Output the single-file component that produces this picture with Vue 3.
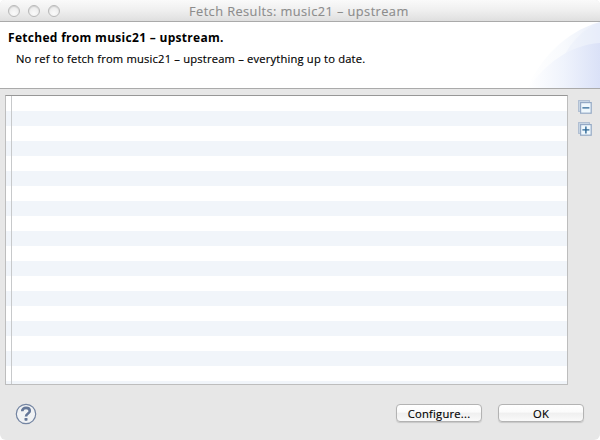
<script setup>
const rows = Array.from({ length: 20 }, (_, i) => i)
</script>

<template>
  <div class="window">
    <header class="titlebar">
      <div class="lights"><i></i><i></i><i></i></div>
      <span class="title">Fetch Results: music21 – upstream</span>
    </header>
    <section class="banner">
      <div class="copy">
        <h1>Fetched from music21 – upstream.</h1>
        <p>No ref to fetch from music21 – upstream – everything up to date.</p>
      </div>
      <svg class="swoosh" width="75" height="66" viewBox="0 0 75 66">
        <defs>
          <linearGradient id="outer" x1="0" x2="1" y1="0" y2="0">
            <stop offset="0" stop-color="#ffffff" />
            <stop offset=".5" stop-color="#f8fafd" />
            <stop offset="1" stop-color="#e9eefa" />
          </linearGradient>
          <linearGradient id="inner" x1="0" x2="1" y1="0" y2="0">
            <stop offset="0" stop-color="#ffffff" />
            <stop offset=".5" stop-color="#eff3fc" />
            <stop offset="1" stop-color="#dae1f7" />
          </linearGradient>
        </defs>
        <path d="M2 66C14 40 38 10 75 0V66Z" fill="url(#outer)" />
        <path d="M38 36C46 20 58 7 75 0V66H38Z" fill="#e4ebf9" opacity=".35" />
        <path d="M3 66C20 43 43 23 75 21V66Z" fill="url(#inner)" />
      </svg>
    </section>
    <main class="content">
      <div class="list">
        <div v-for="r in rows" :key="r" class="row"></div>
      </div>
      <div class="tools">
        <svg width="14" height="14" viewBox="0 0 14 14">
          <rect x=".6" y=".6" width="10.8" height="10.8" fill="#ccdae8" stroke="#afbed2" stroke-width="1.1" />
          <rect x="2.6" y="2.6" width="10.6" height="10.6" fill="#eff8fd" stroke="#94a9c5" stroke-width="1.2" />
          <path d="M4.4 7.9H11.4" stroke="#2b6594" stroke-width="1.3" />
        </svg>
        <svg width="14" height="14" viewBox="0 0 14 14">
          <rect x=".6" y=".6" width="10.8" height="10.8" fill="#ccdae8" stroke="#afbed2" stroke-width="1.1" />
          <rect x="2.6" y="2.6" width="10.6" height="10.6" fill="#eff8fd" stroke="#94a9c5" stroke-width="1.2" />
          <path d="M4.4 7.9H11.4M7.9 4.4V11.4" stroke="#2b6594" stroke-width="1.4" />
        </svg>
      </div>
    </main>
    <footer class="footer">
      <svg class="help" width="22" height="22" viewBox="0 0 22 22">
        <circle cx="11" cy="11" r="9.7" fill="#f0f2f4" stroke="#7485a2" stroke-width="1.2" />
        <path d="M7.2 8.2C7.2 5.9 8.8 4.9 11 4.9S14.8 6 14.8 8C14.8 10.6 11 10.5 11 13.5" fill="none" stroke="#647798" stroke-width="2.6" />
        <rect x="9.5" y="14.9" width="3" height="2.9" rx=".7" fill="#647798" />
      </svg>
      <div class="buttons">
        <button class="configure">Configure...</button>
        <button class="ok">OK</button>
      </div>
    </footer>
  </div>
</template>

<style>
body { margin: 0; background: #fff; }
</style>

<style scoped>
.window {
  width: 600px;
  height: 440px;
  display: flex;
  flex-direction: column;
  box-sizing: border-box;
  overflow: hidden;
  background: #e7e7e7;
  border-radius: 5px 5px 6px 6px;
  font-family: "Open Sans", "Noto Sans", sans-serif;
  color: #000;
  white-space: nowrap;
}
.titlebar {
  height: 22px;
  box-sizing: border-box;
  display: grid;
  grid-template-columns: 189px 1fr;
  align-items: center;
  border-bottom: 1px solid #aaa;
  background: linear-gradient(#fafafa, #efefef 50%, #dfdfdf);
}
.lights { display: flex; gap: 8px; padding-left: 8px; }
.lights i {
  width: 12px;
  height: 12px;
  box-sizing: border-box;
  border: 1px solid #b8b8b8;
  border-radius: 50%;
  background: radial-gradient(circle at 50% 75%, #fafafa, #e6e6e6);
  box-shadow: inset 0 1px 1px #d0d0d0;
}
.title { padding-top: 2px; font-size: 12.8px; line-height: 19px; color: #8c8c8c; letter-spacing: .42px; justify-self: start; -webkit-text-stroke: .12px #8c8c8c; }
.banner {
  height: 67px;
  box-sizing: border-box;
  display: flex;
  justify-content: space-between;
  background: #fff;
  border-bottom: 1px solid #aaa;
}
.copy { padding: 7px 0 0 8px; }
h1 { margin: 0; font-size: 12px; line-height: 18px; font-weight: 700; letter-spacing: .3px; }
p { margin: 3px 0 0 8px; font-size: 11.2px; line-height: 18px; letter-spacing: .18px; -webkit-text-stroke: .15px #000; }
.swoosh { display: block; }
.content { height: 296px; box-sizing: border-box; padding: 6px 0 0 5px; display: flex; }
.list {
  width: 563px;
  height: 290px;
  box-sizing: border-box;
  overflow: hidden;
  border: 1px solid #bdbdbd;
  border-top-color: #979797;
  background: #fff;
}
.row { height: 15px; display: flex; padding-left: 5px; }
.row::before { content: ""; width: 1px; background: #c7c9cb; }
.row:nth-child(even) { background: #f1f5fa; }
.tools { display: flex; flex-direction: column; gap: 8px; padding: 5px 0 0 10px; }
.tools svg { display: block; }
.footer { flex: 1; display: flex; justify-content: space-between; padding: 18px 16px 0 15px; }
.help { display: block; }
.buttons { display: flex; gap: 16px; padding-top: 1px; }
button {
  width: 86px;
  height: 18px;
  box-sizing: border-box;
  padding: 1px 0 0;
  border: 1px solid #b3b3b3;
  border-radius: 4px;
  background: linear-gradient(#fff, #fbfbfb 45%, #efefef 50%, #fafafa);
  box-shadow: 0 1px 1px rgba(0, 0, 0, .14);
  color: #000;
  font-family: inherit;
  font-size: 11.2px;
  line-height: 15px;
  letter-spacing: .24px;
  -webkit-text-stroke: .15px #000;
}
</style>
